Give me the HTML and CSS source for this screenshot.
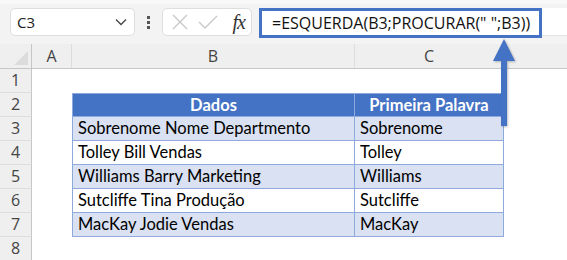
FILE: index.html
```html
<!DOCTYPE html>
<html lang="pt">
<head>
  <meta charset="UTF-8" />
  <title>ESQUERDA e PROCURAR</title>
  <link rel="stylesheet" href="styles.css">
</head>
<body>
  <div class="toolbar">
    <div class="namebox">
      <span>C3</span>
      <svg class="chevron" width="12" height="8" viewBox="0 0 12 8"><path d="M1 1.5 L6 6.5 L11 1.5" fill="none" stroke="#444" stroke-width="1.3"/></svg>
    </div>
    <div class="dots"><i></i><i></i><i></i></div>
    <div class="fxbox">
      <svg width="20" height="20" viewBox="0 0 20 20"><path d="M3 3 L17 17 M17 3 L3 17" stroke="#c8c8c8" stroke-width="1.4"/></svg>
      <svg width="22" height="20" viewBox="0 0 22 20"><path d="M2 10 L8 16 L20 4" fill="none" stroke="#c8c8c8" stroke-width="1.4"/></svg>
      <span class="fx">fx</span>
    </div>
    <div class="formula">
      <div class="formula-text">=ESQUERDA(B3;PROCURAR(" ";B3))</div>
    </div>
  </div>

  <div class="sheet">
    <div class="row head">
      <div class="rh corner"></div>
      <div class="ch a">A</div>
      <div class="ch b">B</div>
      <div class="ch c">C</div>
      <div class="ch d"></div>
    </div>
    <div class="row">
      <div class="rh">1</div>
      <div class="cell a"></div><div class="cell b"></div><div class="cell c"></div><div class="cell d"></div>
    </div>
    <div class="row">
      <div class="rh">2</div>
      <div class="cell a"></div>
      <div class="cell b th first">Dados</div>
      <div class="cell c th">Primeira Palavra</div>
      <div class="cell d"></div>
    </div>
    <div class="row">
      <div class="rh">3</div>
      <div class="cell a"></div>
      <div class="cell b td band first">Sobrenome Nome Departmento</div>
      <div class="cell c td band">Sobrenome</div>
      <div class="cell d"></div>
    </div>
    <div class="row">
      <div class="rh">4</div>
      <div class="cell a"></div>
      <div class="cell b td first">Tolley Bill Vendas</div>
      <div class="cell c td">Tolley</div>
      <div class="cell d"></div>
    </div>
    <div class="row">
      <div class="rh">5</div>
      <div class="cell a"></div>
      <div class="cell b td band first">Williams Barry Marketing</div>
      <div class="cell c td band">Williams</div>
      <div class="cell d"></div>
    </div>
    <div class="row">
      <div class="rh">6</div>
      <div class="cell a"></div>
      <div class="cell b td first">Sutcliffe Tina Produção</div>
      <div class="cell c td">Sutcliffe</div>
      <div class="cell d"></div>
    </div>
    <div class="row">
      <div class="rh">7</div>
      <div class="cell a"></div>
      <div class="cell b td band first">MacKay Jodie Vendas</div>
      <div class="cell c td band">MacKay</div>
      <div class="cell d"></div>
    </div>
    <div class="row">
      <div class="rh">8</div>
      <div class="cell a"></div><div class="cell b"></div><div class="cell c"></div><div class="cell d"></div>
    </div>
  </div>

  <svg class="arrow" width="30" height="92" viewBox="0 0 30 92">
    <path d="M12 22 L18 22 L18 88 L12 88 Z" fill="#4472c4"/>
    <path d="M15 1 L26 23 L4 23 Z" fill="#4472c4"/>
  </svg>
</body>
</html>
```

FILE: styles.css
```css
body {
  margin: 0;
  width: 567px;
  height: 260px;
  overflow: hidden;
  background: #fff;
  font-family: Lato, 'Liberation Sans', sans-serif;
  position: relative;
}
.toolbar {
  height: 44px;
  background: #f3f3f3;
  display: flex;
  align-items: flex-start;
  box-sizing: border-box;
  border-top: 4px solid #f8f8f8;
  padding-top: 4px;
}
.namebox {
  margin-left: 10px;
  width: 125px;
  height: 28px;
  background: #fff;
  border: 1px solid #dedede;
  border-radius: 5px;
  box-sizing: border-box;
  display: flex;
  align-items: center;
  justify-content: space-between;
  padding: 0 7px 0 6px;
  font-family: 'Open Sans', 'Noto Sans', sans-serif;
  font-size: 15px;
  color: #222;
}
.dots {
  width: 27px;
  display: flex;
  flex-direction: column;
  align-items: center;
  gap: 2px;
  padding-top: 8px;
}
.dots i {
  display: block;
  width: 3px;
  height: 3px;
  background: #555;
}
.fxbox {
  width: 90px;
  height: 28px;
  background: #fff;
  border: 1px solid #dedede;
  border-radius: 5px;
  box-sizing: border-box;
  display: flex;
  align-items: center;
  padding: 0 6px 0 7px;
  gap: 7px;
}
.fx {
  margin-left: auto;
  font-family: 'Liberation Serif', serif;
  font-style: italic;
  font-size: 20px;
  color: #333;
  letter-spacing: -1px;
}
.formula {
  flex: 1;
  margin-left: 7px;
  height: 28px;
  background: #fff;
  border-bottom: 1px solid #e2e2e2;
  box-sizing: border-box;
}
.formula-text {
  width: 283px;
  height: 30px;
  border: 3px solid #4472c4;
  box-sizing: border-box;
  padding-left: 10px;
  font-family: 'Open Sans', 'Noto Sans', sans-serif;
  font-size: 16px;
  line-height: 24px;
  color: #111;
  background: #fff;
  white-space: nowrap;
}
.row {
  display: flex;
  height: 24px;
}
.row.head {
  height: 25px;
  background: #efefef;
  border-bottom: 1px solid #c6c6c6;
  box-sizing: border-box;
}
.rh {
  width: 32px;
  flex: none;
  background: #efefef;
  border-right: 1px solid #c6c6c6;
  border-bottom: 1px solid #dcdcdc;
  box-sizing: border-box;
  text-align: center;
  font-family: 'Open Sans', 'Noto Sans', sans-serif;
  font-size: 16px;
  line-height: 23px;
  color: #444;
}
.corner {
  position: relative;
  border-bottom: none;
}
.corner::after {
  content: '';
  position: absolute;
  right: 3px;
  bottom: 3px;
  border-left: 14px solid transparent;
  border-bottom: 14px solid #dcdcdc;
}
.ch {
  text-align: center;
  font-family: 'Open Sans', 'Noto Sans', sans-serif;
  font-size: 16px;
  line-height: 24px;
  color: #444;
  border-right: 1px solid #dcdcdc;
  box-sizing: border-box;
}
.a { width: 40px; flex: none; }
.b { width: 283px; flex: none; }
.c { width: 149px; flex: none; }
.d { flex: 1; border-right: none; }
.cell {
  box-sizing: border-box;
  font-size: 16.5px;
  line-height: 23px;
  color: #000;
  white-space: nowrap;
}
.th {
  background: #4472c4;
  color: #fff;
  font-weight: bold;
  text-align: center;
  border-top: 1px solid #8ea9db;
  border-right: 1px solid #8ea9db;
  border-bottom: 1px solid #8ea9db;
  line-height: 22px;
}
.td {
  padding-left: 5px;
  border-right: 1px solid #8ea9db;
  border-bottom: 1px solid #8ea9db;
}
.first {
  border-left: 1px solid #8ea9db;
}
.band {
  background: #d9e1f2;
}
.arrow {
  position: absolute;
  left: 489px;
  top: 38px;
  filter: drop-shadow(1px 1px 1px rgba(0, 0, 0, 0.25));
}
```
